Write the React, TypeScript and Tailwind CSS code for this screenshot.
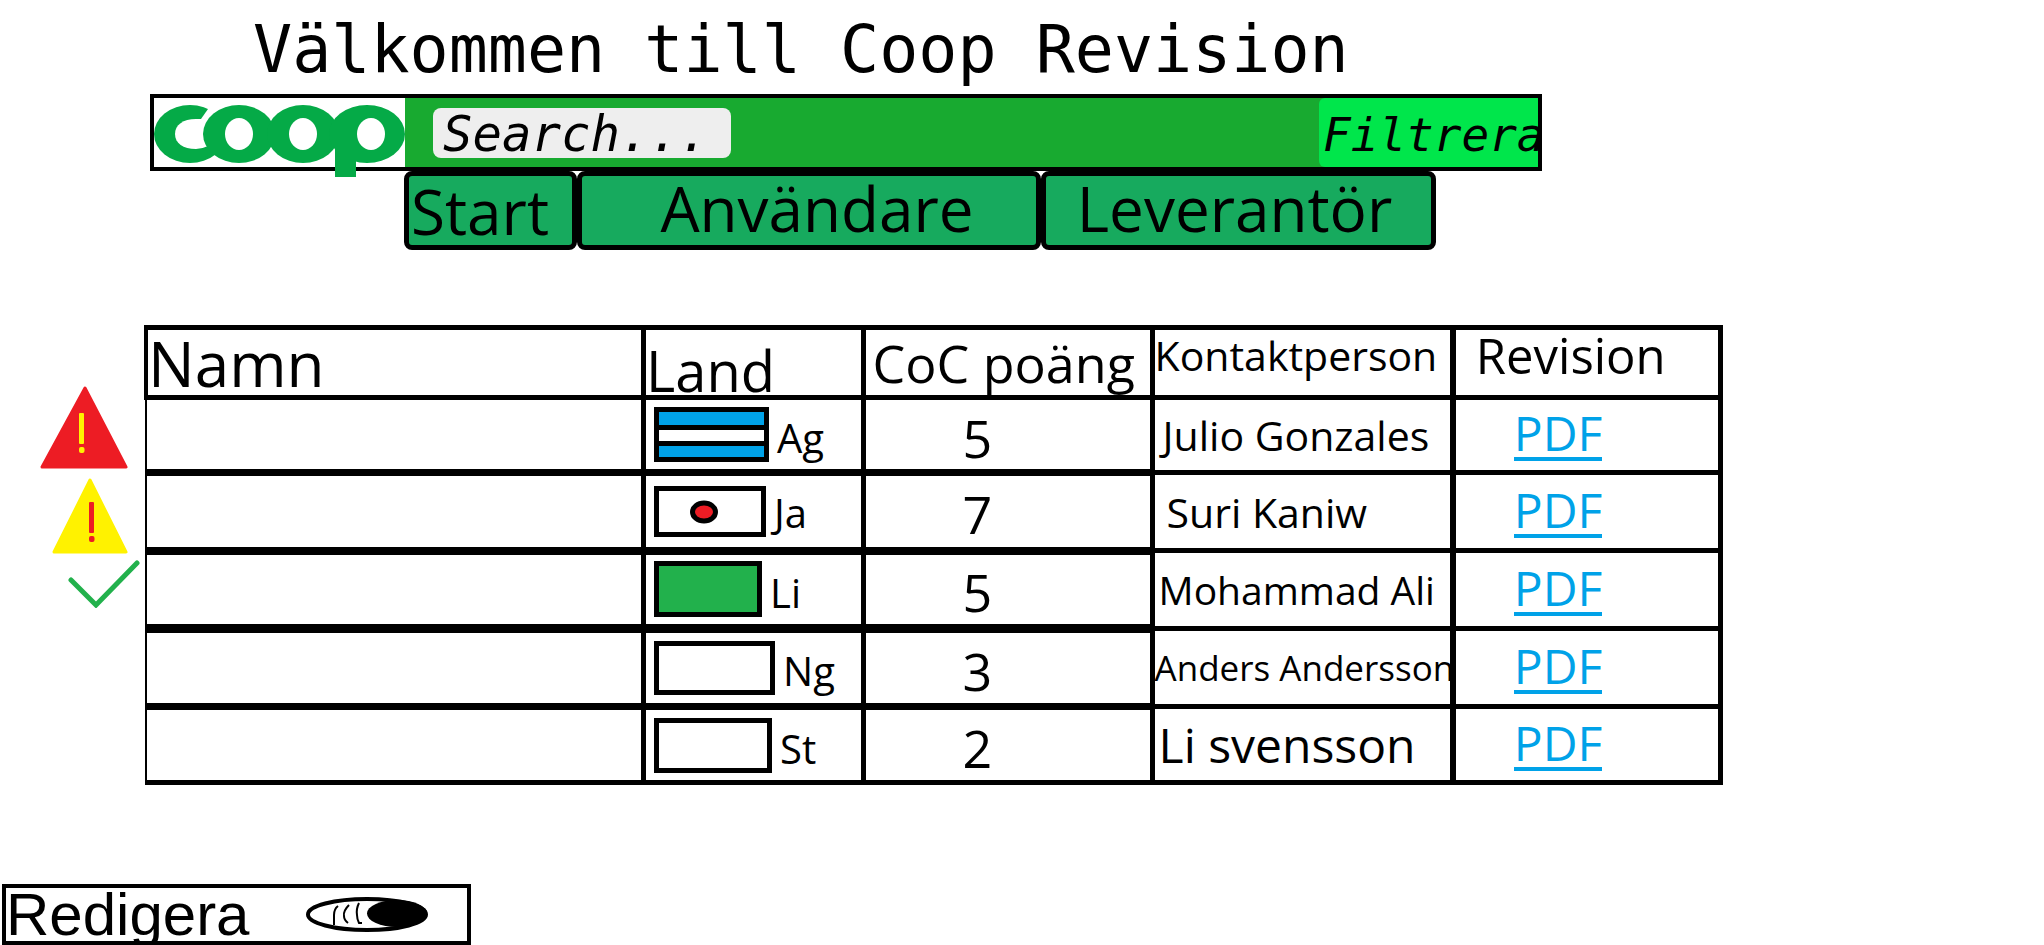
import type { ReactNode } from "react";

function CoopLogo() {
  return (
    <svg
      role="img"
      aria-label="Coop"
      width="251"
      height="80"
      viewBox="0 0 251 80"
      className="block shrink-0"
    >
      <g fill="#05aa47">
        <ellipse cx="36" cy="35" rx="36" ry="29" />
        <polygon points="54,10 47,20 47,46 76,46 76,0 61,0" fill="#fff" />
        <path d="M54 20H42C29 20 21 26 21 35S29 50 42 50Q48 50 54 47Z" fill="#fff" />
        <ellipse cx="85" cy="35" rx="36" ry="29" />
        <ellipse cx="149" cy="35" rx="36" ry="29" />
        <ellipse cx="213" cy="35" rx="38" ry="29" />
        <path d="M181 30H202V78H181Z" />
      </g>
      <g fill="#fff">
        <ellipse cx="85" cy="35" rx="14" ry="16" />
        <ellipse cx="149" cy="35" rx="14" ry="16" />
        <ellipse cx="217" cy="35" rx="14" ry="16" />
      </g>
    </svg>
  );
}

function FlagFrame({ w, h, fill = "#fff", children }: { w: number; h: number; fill?: string; children?: ReactNode }) {
  return (
    <svg width={w} height={h} viewBox={`0 0 ${w} ${h}`} className="block shrink-0" aria-hidden="true">
      <rect x="2.5" y="2.5" width={w - 5} height={h - 5} fill={fill} stroke="#000" strokeWidth="5" />
      {children}
    </svg>
  );
}

type Row = {
  flag: ReactNode;
  code: string;
  score: number;
  contact: string;
  contactClass: string;
  height: string;
  line: string;
};

const rows: Row[] = [
  {
    flag: (
      <FlagFrame w={115} h={55} fill="#00a2e8">
        <rect x="5" y="18" width="105" height="21" fill="#000" />
        <rect x="5" y="23" width="105" height="11" fill="#fff" />
      </FlagFrame>
    ),
    code: "Ag",
    score: 5,
    contact: "Julio Gonzales",
    contactClass: "pl-2 text-[41px]",
    height: "h-[75px]",
    line: "border-b-[7px]",
  },
  {
    flag: (
      <FlagFrame w={112} h={51}>
        <ellipse cx="50" cy="26" rx="11.5" ry="9" fill="#ed1c24" stroke="#000" strokeWidth="5" />
      </FlagFrame>
    ),
    code: "Ja",
    score: 7,
    contact: "Suri Kaniw",
    contactClass: "pl-3 text-[41px]",
    height: "h-[78px]",
    line: "border-b-[8px]",
  },
  {
    flag: <FlagFrame w={108} h={56} fill="#22b14c" />,
    code: "Li",
    score: 5,
    contact: "Mohammad Ali",
    contactClass: "pl-1 text-[39px]",
    height: "h-[78px]",
    line: "border-b-[9px]",
  },
  {
    flag: <FlagFrame w={121} h={54} />,
    code: "Ng",
    score: 3,
    contact: "Anders Andersson",
    contactClass: "text-[35px]",
    height: "h-[78px]",
    line: "border-b-[7px]",
  },
  {
    flag: <FlagFrame w={118} h={55} />,
    code: "St",
    score: 2,
    contact: "Li svensson",
    contactClass: "pl-1 text-[48px]",
    height: "h-[76px]",
    line: "border-b-[5px]",
  },
];

function StatusIcons() {
  return (
    <aside aria-label="Status" className="flex w-[144px] shrink-0 flex-col items-end pt-[61px] pr-1">
      <svg width="100" height="83" viewBox="0 0 100 83" role="img" aria-label="Fel">
        <polygon points="45,2 86,81 2,81" fill="#ed1c24" stroke="#ed1c24" strokeWidth="3" strokeLinejoin="round" />
        <rect x="39" y="27" width="5" height="31" rx="1" fill="#fff200" />
        <rect x="39" y="61" width="5.5" height="6" rx="2" fill="#fff200" />
      </svg>
      <svg width="88" height="76" viewBox="0 0 88 76" role="img" aria-label="Varning" className="mt-[9px]">
        <polygon points="38,2 74,74 2,74" fill="#fff200" stroke="#fff200" strokeWidth="3" strokeLinejoin="round" />
        <rect x="37" y="24" width="5" height="31" rx="1" fill="#ed1c24" />
        <rect x="37" y="58" width="5.5" height="6" rx="2" fill="#ed1c24" />
      </svg>
      <svg width="72" height="48" viewBox="0 0 72 48" role="img" aria-label="Godkänd" className="mt-[6px]">
        <path d="M3 20L28 45L69 3" fill="none" stroke="#22b14c" strokeWidth="5" strokeLinecap="round" />
      </svg>
    </aside>
  );
}

export default function App() {
  return (
    <main className="overflow-hidden bg-white font-['Open_Sans',sans-serif] text-black">
      <h1 className="pt-1.5 pl-[253px] font-['DejaVu_Sans_Mono',monospace] text-[65px] leading-[88px] whitespace-nowrap">
        Välkommen till Coop Revision
      </h1>

      <header className="mr-[502px] ml-[150px] flex h-[77px] border-4 border-black bg-white">
        <div className="relative z-10 h-full w-[251px] shrink-0 pt-[1px]">
          <CoopLogo />
        </div>
        <div className="flex min-w-0 flex-1 items-center bg-[#18aa30] pl-7 font-['DejaVu_Sans_Mono',monospace] italic">
          <input
            type="search"
            aria-label="Search"
            placeholder="Search..."
            className="h-[50px] w-[298px] rounded-lg bg-[#eeeeee] pt-1 pl-2.5 text-[49px] leading-[50px] outline-none placeholder:text-black placeholder:opacity-100"
          />
          <button
            type="button"
            className="ml-auto h-full w-[219px] overflow-hidden rounded-l-md bg-[#00e64b] pt-1 pl-1 text-left text-[46px] leading-[60px] whitespace-nowrap italic"
          >
            Filtrera
          </button>
        </div>
      </header>

      <nav className="ml-[404px] flex h-[79px] text-[62px] leading-[60px]">
        <button type="button" className="w-[173px] rounded-lg border-[5px] border-black bg-[#17aa5e] pl-0.5 text-left">
          Start
        </button>
        <button type="button" className="w-[464px] rounded-lg border-[5px] border-black bg-[#17aa5e] pb-1.5 pl-4">
          Användare
        </button>
        <button type="button" className="w-[395px] rounded-lg border-[5px] border-black bg-[#17aa5e] pr-2 pb-1.5">
          Leverantör
        </button>
      </nav>

      <section className="mt-[75px] mr-[321px] flex">
        <StatusIcons />
        <table className="w-full table-fixed border-collapse border-t-[5px] border-r-[5px] border-b-[5px] border-l-2 border-black text-left whitespace-nowrap">
          <colgroup>
            <col className="w-[31.6%]" />
            <col className="w-[14%]" />
            <col className="w-[18.3%]" />
            <col className="w-[19.1%]" />
            <col className="w-[17%]" />
          </colgroup>
          <thead>
            <tr className="h-[70px]">
              <th className="border-r-[5px] border-b-[5px] border-l-4 border-black p-0 align-middle text-[62px] leading-[60px] font-normal">
                Namn
              </th>
              <th className="border-r-[5px] border-b-[5px] border-black p-0 align-bottom text-[56px] leading-[50px] font-normal">
                Land
              </th>
              <th className="border-r-[5px] border-b-[5px] border-black p-0 pl-1.5 align-middle text-[52px] leading-[60px] font-normal">
                CoC poäng
              </th>
              <th className="border-r-[6px] border-b-[5px] border-black p-0 align-top text-[41px] leading-[50px] font-normal">
                Kontaktperson
              </th>
              <th className="border-b-[5px] border-black p-0 pl-5 align-top text-[49px] leading-[50px] font-normal">
                Revision
              </th>
            </tr>
          </thead>
          <tbody>
            {rows.map((row) => (
              <tr key={row.code} className={row.height}>
                <td className={`border-r-[5px] border-black p-0 ${row.line}`} />
                <td className={`border-r-[5px] border-black p-0 pl-2 align-middle ${row.line}`}>
                  <div className="flex items-end gap-2 text-[40px] leading-[48px]">
                    {row.flag}
                    {row.code}
                  </div>
                </td>
                <td className={`border-r-[5px] border-black p-0 pt-1.5 pl-24 align-middle text-[52px] leading-[50px] ${row.line}`}>
                  {row.score}
                </td>
                <td className="border-r-[6px] border-b-[5px] border-black p-0 align-middle">
                  <div className={`leading-[50px] ${row.contactClass}`}>{row.contact}</div>
                </td>
                <td className="border-b-[5px] border-black p-0 pl-[58px] align-middle">
                  <a
                    href={`#${row.code}`}
                    className="block w-fit border-b-4 border-[#00a2e8] text-[48px] leading-[48px] text-[#00a2e8]"
                  >
                    PDF
                  </a>
                </td>
              </tr>
            ))}
          </tbody>
        </table>
      </section>

      <label className="mt-[99px] ml-[2px] flex h-[61px] w-[469px] items-center overflow-hidden border-4 border-black font-['Liberation_Sans',sans-serif] text-[60px] leading-[53px]">
        Redigera
        <input type="checkbox" role="switch" defaultChecked className="sr-only" />
        <svg width="122" height="35" viewBox="0 0 122 35" aria-hidden="true" className="ml-14 shrink-0">
          <ellipse cx="61" cy="17.5" rx="59" ry="15.5" fill="#fff" stroke="#000" strokeWidth="4" />
          <ellipse cx="91" cy="16.5" rx="30" ry="13.5" fill="#000" />
          <path
            d="M32 9Q28 12 28 18V28M43 8Q37 14 38 19Q38 23 42 26M53 6Q50 12 51 18Q51 22 53 26H56"
            fill="none"
            stroke="#000"
            strokeWidth="2"
          />
        </svg>
      </label>
    </main>
  );
}
